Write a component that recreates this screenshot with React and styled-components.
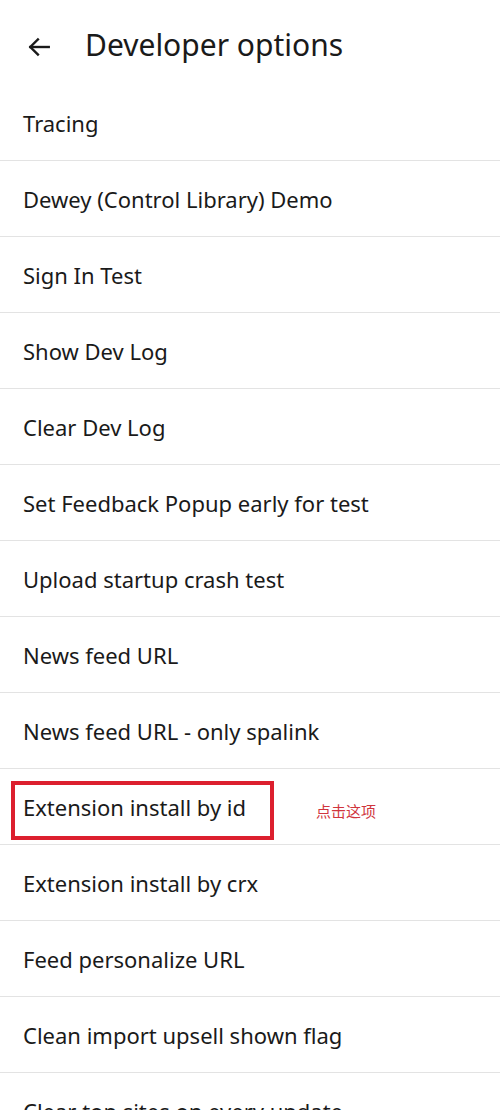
import styled, { createGlobalStyle } from "styled-components";

const GlobalStyle = createGlobalStyle`
    body {
        margin: 0;
        background: #ffffff;
        font-family: "Noto Sans", "Noto Sans CJK SC", sans-serif;
        color: #1a1a1a;
    }
`

const opcoes = [
    "Tracing",
    "Dewey (Control Library) Demo",
    "Sign In Test",
    "Show Dev Log",
    "Clear Dev Log",
    "Set Feedback Popup early for test",
    "Upload startup crash test",
    "News feed URL",
    "News feed URL - only spalink",
    "Extension install by id",
    "Extension install by crx",
    "Feed personalize URL",
    "Clean import upsell shown flag",
    "Clear top sites on every update",
];

function Seta(){
    return(
        <svg width="26" height="26" viewBox="0 0 24 24" fill="none" stroke="#1a1a1a" strokeWidth="2.2" strokeLinecap="square" strokeLinejoin="miter">
            <path d="M21 12H4" />
            <path d="M11 5l-7 7 7 7" />
        </svg>
    );
}

export default function App(){
    return(
        <Tela>
            <GlobalStyle />
            <Topo>
                <Voltar><Seta /></Voltar>
                <Titulo>Developer options</Titulo>
            </Topo>
            <Lista>
                {opcoes.map(opcao =>
                    <Item key={opcao}>
                        {opcao === "Extension install by id" ? (
                            <>
                                <Destaque>{opcao}</Destaque>
                                <Aviso>点击这项</Aviso>
                            </>
                        ) : opcao}
                    </Item>
                )}
            </Lista>
        </Tela>
    );
}

const Tela = styled.div`
    width: 500px;
    height: 1110px;
    overflow: hidden;
    background: #ffffff;
`

const Topo = styled.div`
    height: 85px;
    display: flex;
    align-items: center;
    padding-left: 26px;
    padding-top: 8px;
    box-sizing: border-box;
`

const Voltar = styled.div`
    width: 26px;
    height: 26px;
    display: flex;
    align-items: center;
    justify-content: center;
`

const Titulo = styled.div`
    margin-left: 33px;
    margin-top: -4px;
    font-size: 30px;
    font-weight: 400;
    color: #1a1a1a;
`

const Lista = styled.div`
    display: flex;
    flex-direction: column;
`

const Item = styled.div`
    height: 76px;
    box-sizing: border-box;
    border-bottom: 1px solid #e3e3e3;
    display: flex;
    align-items: center;
    padding-left: 23px;
    font-size: 22px;
    color: #1a1a1a;
`

const Destaque = styled.div`
    margin-left: -12px;
    margin-top: 7px;
    width: 263px;
    height: 59px;
    box-sizing: border-box;
    border: 4px solid #dc1f2e;
    display: flex;
    align-items: center;
    padding-left: 8px;
    padding-bottom: 6px;
`

const Aviso = styled.div`
    margin-left: 42px;
    margin-top: 8px;
    font-family: "Noto Sans CJK SC", sans-serif;
    font-size: 15px;
    color: #d0353d;
`
